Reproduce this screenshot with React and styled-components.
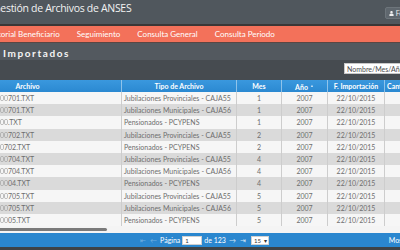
import styled, { createGlobalStyle } from "styled-components";
import { FaUser } from "react-icons/fa";

const GlobalStyle = createGlobalStyle`
  html, body {
    margin: 0;
    padding: 0;
    width: 400px;
    height: 250px;
    overflow: hidden;
    background: #3e4347;
  }
  body {
    font-family: Lato, "Open Sans", sans-serif;
  }
  * { box-sizing: border-box; }
`;

const Shell = styled.div`
  width: 540px;
  margin-left: -66px;
  display: flex;
  flex-direction: column;
`;

const TopBar = styled.header`
  height: 26px;
  background: #50575d;
  border-bottom: 2px solid #3a3636;
  display: flex;
  align-items: flex-start;
  justify-content: space-between;
  padding: 0 56px 0 59px;
`;

const Title = styled.h1`
  margin: 0;
  padding-top: 1px;
  font-family: "Open Sans", sans-serif;
  font-weight: 400;
  font-size: 10.5px;
  line-height: 14px;
  letter-spacing: -0.3px;
  color: #f2f2f2;
`;

const UserButton = styled.div`
  margin-top: 7px;
  height: 12px;
  display: flex;
  align-items: center;
  gap: 2px;
  padding: 0 3px;
  background: #5f676e;
  border: 1px solid #6d757b;
  border-radius: 2px;
  color: #eee;
  font-size: 7px;
  svg { width: 5px; height: 5px; }
`;

const NavBar = styled.nav`
  height: 17px;
  background: #f3715a;
  border-bottom: 1px solid #5a4744;
  display: flex;
  padding-left: 44px;
`;

const NavItem = styled.a`
  padding: 0 8.5px;
  line-height: 16px;
  font-size: 8px;
  color: #fff;
  text-decoration: none;
  white-space: nowrap;
`;

const Section = styled.div`
  height: 17px;
  background: #53595f;
  padding: 4px 0 0 69px;
`;

const SectionTitle = styled.h2`
  margin: 0;
  font-family: Lato, sans-serif;
  font-weight: 700;
  font-size: 10px;
  line-height: 12px;
  letter-spacing: 1.6px;
  color: #f5f5f5;
`;

const Toolbar = styled.div`
  height: 20px;
  background: #464b50;
  display: flex;
  justify-content: flex-end;
  align-items: flex-start;
  padding: 3px 30px 0 0;
`;

const Search = styled.input`
  width: 100px;
  height: 11px;
  border: 1px solid #c8c8c8;
  background: #fff;
  padding: 0 2px;
  font-family: Lato, sans-serif;
  font-size: 7px;
  outline: none;
  &::placeholder { color: #4a4a4a; }
`;

const cols = "188px 115px 45px 46px 57px 1fr";

const HeadRow = styled.div`
  display: grid;
  grid-template-columns: ${cols};
  height: 12px;
  background: linear-gradient(#3a98de, #2b89d1);
`;

const Th = styled.div`
  border-right: 1px solid rgba(255, 255, 255, 0.45);
  color: #fff;
  font-weight: 700;
  font-size: 7px;
  line-height: 12px;
  text-align: ${(p) => (p.$left ? "left" : "center")};
  padding-left: ${(p) => (p.$left ? "2px" : "0")};
  white-space: nowrap;
  overflow: hidden;
`;

const Sort = styled.span`
  font-size: 4px;
  vertical-align: 3px;
  margin-left: 2px;
  opacity: 0.7;
`;

const Row = styled.div`
  display: grid;
  grid-template-columns: ${cols};
  height: 12.2px;
  background: ${(p) => (p.$odd ? "#dadada" : "#f6f6f6")};
`;

const Td = styled.div`
  border-right: 1px solid #cdcdcd;
  color: #6e6e6e;
  font-size: 7px;
  line-height: 12.2px;
  text-align: ${(p) => (p.$center ? "center" : "left")};
  padding-left: ${(p) => (p.$center ? "0" : "2px")};
  white-space: nowrap;
  overflow: hidden;
`;

const Hidden = styled.span`
  display: inline-block;
  width: ${(p) => p.$w}px;
  overflow: hidden;
  text-align: right;
  vertical-align: top;
  color: #a0a0a0;
  filter: blur(0.7px);
`;

const ScrollStrip = styled.div`
  height: 7px;
  background: #f4f4f4;
  padding-top: 2px;
`;

const Thumb = styled.div`
  width: 173px;
  height: 3px;
  border-radius: 2px;
  background: #7a7a7a;
`;

const Footer = styled.footer`
  height: 14px;
  background: #2a87cf;
  display: grid;
  grid-template-columns: 1fr auto 1fr;
  align-items: center;
  color: #fff;
  font-size: 7px;
`;

const Pager = styled.div`
  grid-column: 2;
  display: flex;
  align-items: center;
  gap: 2px;
`;

const Arrow = styled.span`
  color: ${(p) => (p.$dim ? "rgba(255,255,255,0.35)" : "rgba(255,255,255,0.8)")};
  font-size: 7px;
  margin: 0 1px;
`;

const PageInput = styled.div`
  width: 20px;
  height: 9px;
  background: #fff;
  border: 1px solid #d0d0d0;
  color: #333;
  font-size: 6px;
  line-height: 7px;
  padding-left: 2px;
`;

const SelectBox = styled.div`
  width: 18px;
  height: 9px;
  background: #fff;
  border: 1px solid #d0d0d0;
  color: #333;
  font-size: 6px;
  line-height: 7px;
  display: flex;
  justify-content: space-between;
  padding: 0 1px 0 2px;
  margin-left: 2px;
`;

const Info = styled.div`
  justify-self: end;
  padding-right: 4px;
  white-space: nowrap;
`;

const PROV = "Jubilaciones Provinciales - CAJA55";
const MUN = "Jubilaciones Municipales - CAJA56";
const PENS = "Pensionados - PCYPENS";

const rows = [
  { shown: "701", type: PROV, mes: 1 },
  { shown: "701", type: MUN, mes: 1 },
  { shown: "", type: PENS, mes: 1 },
  { shown: "702", type: PROV, mes: 2 },
  { shown: "702", type: PENS, mes: 2, w: 68 },
  { shown: "704", type: PROV, mes: 4 },
  { shown: "704", type: MUN, mes: 4 },
  { shown: "04", type: PENS, mes: 4 },
  { shown: "705", type: PROV, mes: 5 },
  { shown: "705", type: MUN, mes: 5 },
  { shown: "05", type: PENS, mes: 5 },
];

export default function App() {
  return (
    <>
      <GlobalStyle />
      <Shell>
        <TopBar>
          <Title>Gestión de Archivos de ANSES</Title>
          <UserButton>
            <FaUser />
            Felipe
          </UserButton>
        </TopBar>
        <NavBar>
          <NavItem>Historial Beneficiario</NavItem>
          <NavItem>Seguimiento</NavItem>
          <NavItem>Consulta General</NavItem>
          <NavItem>Consulta Periodo</NavItem>
        </NavBar>
        <Section>
          <SectionTitle>Importados</SectionTitle>
        </Section>
        <Toolbar>
          <Search placeholder="Nombre/Mes/Año" />
        </Toolbar>
        <HeadRow>
          <Th>Archivo</Th>
          <Th>Tipo de Archivo</Th>
          <Th>Mes</Th>
          <Th>
            Año<Sort>▲</Sort>
          </Th>
          <Th>F. Importación</Th>
          <Th $left>Cantidad</Th>
        </HeadRow>
        {rows.map((r, i) => (
          <Row key={i} $odd={i % 2 === 1}>
            <Td>
              <Hidden $w={r.w || 72}>A2007_00</Hidden>
              {r.shown}.TXT
            </Td>
            <Td>{r.type}</Td>
            <Td $center>{r.mes}</Td>
            <Td $center>2007</Td>
            <Td $center>22/10/2015</Td>
            <Td $center></Td>
          </Row>
        ))}
        <ScrollStrip>
          <Thumb />
        </ScrollStrip>
        <Footer>
          <Pager>
            <Arrow $dim>⇤</Arrow>
            <Arrow $dim>←</Arrow>
            <span>Página</span>
            <PageInput>1</PageInput>
            <span>de 123</span>
            <Arrow>→</Arrow>
            <Arrow>⇥</Arrow>
            <SelectBox>
              15<span>▾</span>
            </SelectBox>
          </Pager>
          <Info>Mostrando 1 - 15 de 1845</Info>
        </Footer>
      </Shell>
    </>
  );
}
